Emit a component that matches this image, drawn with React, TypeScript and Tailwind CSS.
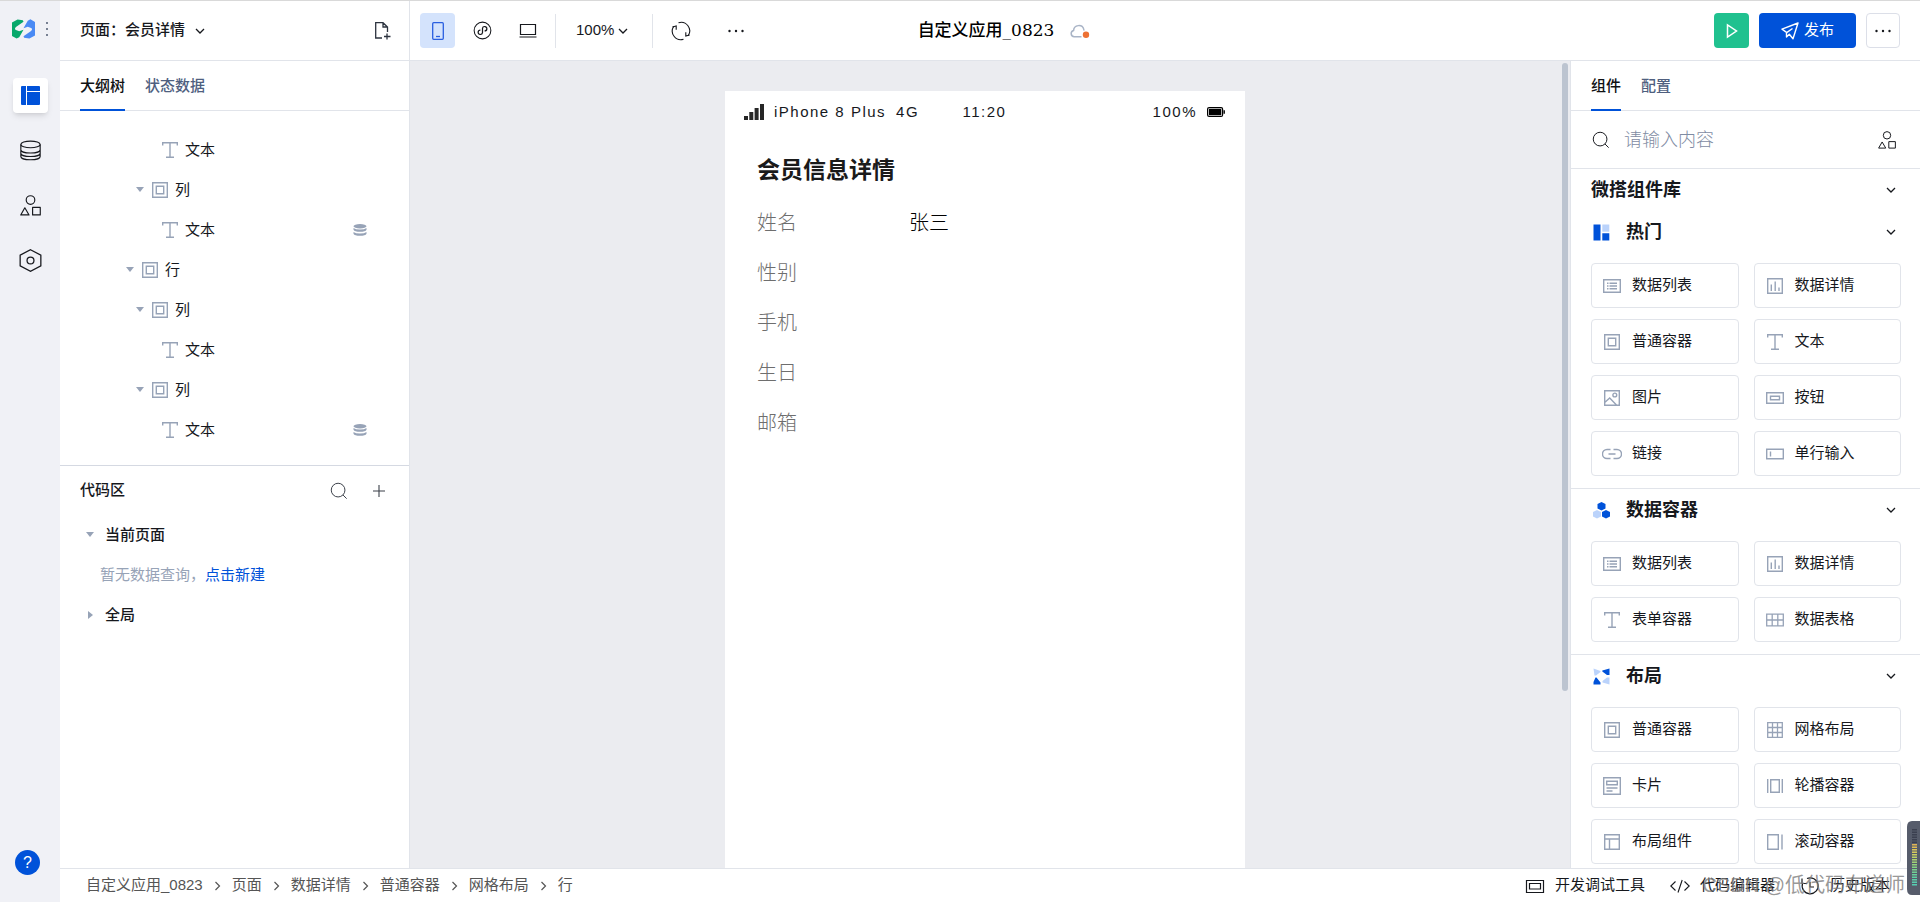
import { useState } from "react";
import type { ReactNode } from "react";
import clsx from "clsx";

type IconProps = { size?: number; className?: string };

const Svg = ({
  size = 20,
  className,
  strokeWidth = 1.1,
  children,
}: IconProps & { strokeWidth?: number; children: ReactNode }) => (
  <svg
    width={size}
    height={size}
    viewBox="0 0 20 20"
    fill="none"
    stroke="currentColor"
    strokeWidth={strokeWidth}
    className={clsx("shrink-0", className)}
    aria-hidden="true"
  >
    {children}
  </svg>
);

const LogoIcon = () => (
  <svg width="23" height="20" viewBox="0 0 70 60" className="shrink-0" aria-hidden="true">
    <path fill="#07a86b" d="M0 10 17 1 33 3 35 8 12 24Q6 30 12 33L22 37 35 32 22 55 14 59 0 51Z" />
    <path fill="#4a8af4" d="M70 50 53 59 37 57 35 52 58 36Q64 30 58 27L48 23 35 28 48 5 56 0 70 9Z" />
  </svg>
);

const ChevronDown = ({ size = 10, className }: IconProps) => (
  <svg width={size} height={size} viewBox="0 0 10 10" fill="none" stroke="currentColor" strokeWidth="1.3" className={clsx("shrink-0", className)} aria-hidden="true">
    <path d="M1 3 5 7 9 3" />
  </svg>
);

const ChevronRight = () => (
  <svg width="9" height="10" viewBox="0 0 9 10" fill="none" stroke="currentColor" strokeWidth="1.2" className="shrink-0" aria-hidden="true">
    <path d="M2.500 1 6.500 5 2.500 9" />
  </svg>
);

const Caret = ({ open = true }: { open?: boolean }) => (
  <svg width="12" height="12" viewBox="0 0 12 12" fill="#97a3b7" className="shrink-0" aria-hidden="true">
    {open ? <path d="M2 3h8L6 8Z" /> : <path d="M4 2v8l5-4Z" />}
  </svg>
);

const LayoutIcon = () => (
  <svg width="19" height="19" viewBox="0 0 19 19" fill="#0052d9" className="shrink-0" aria-hidden="true">
    <path d="M1 0h4v19H1a1 1 0 0 1-1-1V1a1 1 0 0 1 1-1ZM6 0H18a1 1 0 0 1 1 1v4H6ZM6 6H19V18a1 1 0 0 1-1 1H6Z" />
  </svg>
);

const DatabaseIcon = ({ size }: IconProps) => (
  <Svg size={size}>
    <ellipse cx="10" cy="4.200" rx="9.200" ry="3.200" />
    <path d="M.8 4.200v11.400c0 1.800 4 3.200 9.200 3.200s9.200-1.400 9.200-3.200V4.200M.8 9.200c0 1.800 4 3.200 9.200 3.200s9.200-1.400 9.200-3.200M.8 12.500c0 1.800 4 3.200 9.200 3.200s9.200-1.400 9.200-3.200" />
  </Svg>
);

const DatabaseSolid = () => (
  <svg width="14" height="12" viewBox="0 0 14 12" fill="#97a3b7" className="shrink-0" aria-hidden="true">
    <ellipse cx="7" cy="2.200" rx="6.500" ry="2.200" />
    <path d="M.5 4q2 1.500 6.500 1.500T13.500 4v1.800q-1 2-6.500 2t-6.500-2ZM.5 8q2 1.500 6.500 1.500T13.500 8v1.800q-1 2-6.500 2t-6.500-2Z" />
  </svg>
);

const ShapesIcon = ({ size }: IconProps) => (
  <Svg size={size}>
    <circle cx="10" cy="4.800" r="4.100" />
    <path d="M4.600 12.200 8.600 19H.7ZM12 11.800h7.300V19H12Z" strokeLinejoin="round" />
  </Svg>
);

const HexIcon = ({ size }: IconProps) => (
  <Svg size={size}>
    <path d="m10 .6 9 4.700v9.400l-9 4.700L1 14.700V5.300Z" />
    <circle cx="10" cy="10" r="3" />
  </Svg>
);

const SearchIcon = ({ size = 18 }: IconProps) => (
  <Svg size={size}>
    <circle cx="9" cy="9" r="7.600" />
    <path d="m14.500 14.500 4 4" />
  </Svg>
);

const PlusIcon = () => (
  <Svg size={12} strokeWidth={1.8}>
    <path d="M10 0v20M0 10h20" />
  </Svg>
);

const NewPageIcon = () => (
  <svg width="17" height="19" viewBox="0 0 17 19" fill="none" stroke="currentColor" strokeWidth="1.3" className="shrink-0" aria-hidden="true">
    <path d="M8 17H1.700V1.700H9L13.500 6v5M9 1.700V6h4.500M13 12.500v6M10 15.500h6.500" />
  </svg>
);

const PhoneIcon = () => (
  <svg width="12" height="18" viewBox="0 0 12 18" fill="none" stroke="currentColor" strokeWidth="1.300" className="shrink-0" aria-hidden="true">
    <rect x=".7" y=".7" width="10.600" height="16.600" rx="1" />
    <path d="M4 14.500h4" />
  </svg>
);

const MiniProgramIcon = () => (
  <Svg size={19}>
    <circle cx="10" cy="10" r="8.800" />
    <path d="M7.800 9.600a2.300 2.300 0 1 0 2.200 2.600V7.800a2.300 2.300 0 1 1 2.200 2.600" strokeWidth="1.300" />
  </Svg>
);

const LaptopIcon = () => (
  <svg width="18" height="15" viewBox="0 0 18 15" fill="none" stroke="currentColor" strokeWidth="1.200" className="shrink-0" aria-hidden="true">
    <path d="M1.500 1.500h15v10h-15ZM.5 14h17" />
  </svg>
);

const RefreshIcon = () => (
  <Svg size={20}>
    <path d="M7.500 1.700A8.600 8.600 0 0 1 17.200 14.700M12.500 18.300A8.600 8.600 0 0 1 2.800 5.300" />
    <path d="M14.800 11.200v3.900l3.800-1.200M5.200 8.800V4.900L1.400 6.100" />
  </Svg>
);

const DotsIcon = () => (
  <svg width="18" height="4" viewBox="0 0 18 4" fill="currentColor" className="shrink-0" aria-hidden="true">
    <circle cx="2.500" cy="2" r="1.200" />
    <circle cx="9" cy="2" r="1.200" />
    <circle cx="15.500" cy="2" r="1.200" />
  </svg>
);

const CloudIcon = () => (
  <svg width="20" height="16" viewBox="0 0 20 16" fill="none" className="shrink-0" aria-hidden="true">
    <path d="M11.500 13.800H4.200A3.200 3.200 0 0 1 3.600 7.500 5.200 5.200 0 0 1 13.800 6.400L14.200 7.500" stroke="#a9b4c6" strokeWidth="1.500" />
    <circle cx="16" cy="11.800" r="3.200" fill="#ed7133" />
  </svg>
);

const PlayIcon = () => (
  <svg width="12" height="16" viewBox="0 0 12 16" fill="none" stroke="#fff" strokeWidth="1.500" className="shrink-0" aria-hidden="true">
    <path d="M1.500 2v12L10.500 8Z" />
  </svg>
);

const SendIcon = () => (
  <svg width="18" height="18" viewBox="0 0 18 18" fill="none" stroke="#fff" strokeWidth="1.400" strokeLinejoin="round" className="shrink-0" aria-hidden="true">
    <path d="M17 1 1 7.200 5.500 10.300V15L8.300 12.300 12 16.800ZM6 10.300 11.500 6.500" />
  </svg>
);

const BoxIcon = ({ size }: IconProps) => (
  <Svg size={size} strokeWidth={1.4}>
    <path d="M2.700 2.700h14.600v14.600H2.700ZM6.300 6.300h7.400v7.400H6.300Z" />
  </Svg>
);

const TextIcon = ({ size }: IconProps) => (
  <Svg size={size} strokeWidth={1.4}>
    <path d="M2.700 5.500V2.700h14.600v2.800M10 2.700v14.600M6 17.300h8" />
  </Svg>
);

const ListIcon = () => (
  <Svg strokeWidth={1.4}>
    <path d="M1.700 3.700h16.600v12.600H1.700ZM5 7.200h1.500M7.500 7.200H15M5 10h1.500M7.500 10H15M5 12.800h1.500M7.500 12.800H15" />
  </Svg>
);

const DetailIcon = () => (
  <Svg strokeWidth={1.400}>
    <path d="M2.700 2.700h14.600v14.600H2.700ZM6.300 8.500V15M10.200 5.500V15M14 11.500V15" />
  </Svg>
);

const ImageIcon = () => (
  <Svg strokeWidth={1.400}>
    <path d="M2.700 2.700h14.600v14.600H2.700ZM2.700 14.500l5-4.500 7 7.300" />
    <circle cx="12.800" cy="7" r="1.900" />
  </Svg>
);

const ButtonIcon = () => (
  <Svg strokeWidth={1.400}>
    <path d="M1.700 4.700h16.600v10.600H1.700ZM5.500 8.200h9v3.600h-9Z" />
  </Svg>
);

const LinkIcon = () => (
  <Svg strokeWidth={1.400}>
    <path d="M8.500 5.500H5a4.500 4.500 0 0 0 0 9h3.500M11.500 5.500H15a4.500 4.500 0 0 1 0 9h-3.500M6.500 10h7" />
  </Svg>
);

const InputIcon = () => (
  <Svg strokeWidth={1.400}>
    <path d="M1.700 5.200h16.600v9.600H1.700ZM5.500 7.500v5" />
  </Svg>
);

const TableIcon = () => (
  <Svg strokeWidth={1.300}>
    <path d="M1.700 4.200h16.600v11.600H1.700ZM1.700 10h16.600M7.200 4.200v11.600M12.800 4.200v11.600" />
  </Svg>
);

const GridIcon = () => (
  <Svg strokeWidth={1.300}>
    <path d="M2.700 2.700h14.600v14.600H2.700ZM2.700 7.500h14.600M2.700 12.500h14.600M7.500 2.700v14.600M12.500 2.700v14.600" />
  </Svg>
);

const CardIcon = () => (
  <Svg strokeWidth={1.400}>
    <path d="M1.700 1.700h16.600v16.600H1.700ZM4.700 5.200h10.600v3.600H4.700ZM4.500 12h11M4.500 15h6" />
  </Svg>
);

const CarouselIcon = () => (
  <Svg strokeWidth={1.400}>
    <path d="M2.700 3v14M5.700 3.700h8.600v12.600H5.700ZM17.300 3v14" />
  </Svg>
);

const PanelsIcon = () => (
  <Svg strokeWidth={1.400}>
    <path d="M2.700 2.700h14.600v14.600H2.700ZM2.700 7h14.600M7.500 7v10.300" />
  </Svg>
);

const ScrollIcon = () => (
  <Svg strokeWidth={1.400}>
    <path d="M2.700 2.700h10.600v14.600H2.700ZM17 2.500v15" />
  </Svg>
);

const HotIcon = () => (
  <svg width="17" height="17" viewBox="0 0 17 17" className="shrink-0" aria-hidden="true">
    <path fill="#0052d9" d="M.5.500h7v16h-7ZM9.300 9.300h7v7.200h-7Z" />
    <path fill="#bbd3fb" d="M9.300.500h7v7.200h-7Z" />
  </svg>
);

const DataGroupIcon = () => (
  <svg width="17" height="17" viewBox="0 0 17 17" className="shrink-0" aria-hidden="true">
    <path fill="#bbd3fb" d="m4 8 4 2.100v4.400l-4 2.100-4-2.100v-4.400Z" />
    <path fill="#0052d9" d="m8.500 0 4 2.100v4.400l-4 2.100-4-2.100V2.100ZM13 8l4 2.100v4.400l-4 2.100-4-2.100v-4.400Z" />
  </svg>
);

const LayoutGroupIcon = () => (
  <svg width="17" height="17" viewBox="0 0 17 17" className="shrink-0" aria-hidden="true">
    <path fill="#0052d9" d="M16.500.500v6.500h-2.500L9.300 3.500v-1ZM.500 16.500v-2.500L2.500 9.500H3.500L7.500 14.500v2Z" />
    <path fill="#bbd3fb" d="M.500.500 7.500 3v1L3 7.500H1.500ZM16.500 16.500l-7-2v-1.500l4.500-3.500h2.500Z" />
  </svg>
);

const SignalIcon = () => (
  <svg width="20" height="16" viewBox="0 0 20 16" fill="#262626" className="shrink-0" aria-hidden="true">
    <path d="M0 12h4v4H0ZM5.300 8h4v8h-4ZM10.600 4h4v12h-4ZM16 0h4v16h-4Z" />
  </svg>
);

const BatteryIcon = () => (
  <svg width="18" height="10" viewBox="0 0 18 10" fill="none" stroke="#000" className="shrink-0" aria-hidden="true">
    <rect x=".6" y=".6" width="15" height="8.800" rx="1.500" strokeWidth="1.200" />
    <path d="M1.900 1.900h12.400v6.200H1.900Z" fill="#000" stroke="none" />
    <path d="M17.200 3.200v3.600" strokeWidth="1.400" />
  </svg>
);

const DebugIcon = () => (
  <Svg strokeWidth={1.200}>
    <path d="M1.500 4.500h17v12h-17ZM4.500 7.500h11v5.500h-11Z" />
  </Svg>
);

const CodeIcon = () => (
  <Svg>
    <path d="M5.500 5.500.8 10l4.700 4.500M14.500 5.500l4.700 4.500-4.700 4.500M12.200 4 8 16.500" />
  </Svg>
);

const HistoryIcon = () => (
  <Svg strokeWidth={1.200}>
    <path d="M2.500 7.500a8 8 0 1 0 4.500-5M2 2.500v5h5M10 6v5h4" />
  </Svg>
);

const Tab = ({ active, children, onClick }: { active: boolean; children: ReactNode; onClick: () => void }) => (
  <button
    role="tab"
    aria-selected={active}
    onClick={onClick}
    className={clsx(
      "-mb-px h-[50px] border-b-2 pt-0.5 font-medium",
      active ? "border-[#0052d9] text-[#101113]" : "border-transparent text-[#4f5f7f]"
    )}
  >
    {children}
  </button>
);

const Tabs = ({ tabs }: { tabs: string[] }) => {
  const [current, setCurrent] = useState(0);

  return (
    <div role="tablist" className="flex h-[50px] shrink-0 gap-5 border-b border-[#e1e4ea] px-5">
      {tabs.map((tab, index) => (
        <Tab key={tab} active={current === index} onClick={() => setCurrent(index)}>
          {tab}
        </Tab>
      ))}
    </div>
  );
};

const tree = [
  { label: "文本", kind: "text", indent: "pl-[84px]", bound: false },
  { label: "列", kind: "box", indent: "pl-[74px]", bound: false },
  { label: "文本", kind: "text", indent: "pl-[84px]", bound: true },
  { label: "行", kind: "box", indent: "pl-[64px]", bound: false },
  { label: "列", kind: "box", indent: "pl-[74px]", bound: false },
  { label: "文本", kind: "text", indent: "pl-[84px]", bound: false },
  { label: "列", kind: "box", indent: "pl-[74px]", bound: false },
  { label: "文本", kind: "text", indent: "pl-[84px]", bound: true },
];

const groups = [
  {
    title: "热门",
    icon: <HotIcon />,
    items: [
      { label: "数据列表", icon: <ListIcon /> },
      { label: "数据详情", icon: <DetailIcon /> },
      { label: "普通容器", icon: <BoxIcon /> },
      { label: "文本", icon: <TextIcon /> },
      { label: "图片", icon: <ImageIcon /> },
      { label: "按钮", icon: <ButtonIcon /> },
      { label: "链接", icon: <LinkIcon /> },
      { label: "单行输入", icon: <InputIcon /> },
    ],
  },
  {
    title: "数据容器",
    icon: <DataGroupIcon />,
    items: [
      { label: "数据列表", icon: <ListIcon /> },
      { label: "数据详情", icon: <DetailIcon /> },
      { label: "表单容器", icon: <TextIcon /> },
      { label: "数据表格", icon: <TableIcon /> },
    ],
  },
  {
    title: "布局",
    icon: <LayoutGroupIcon />,
    items: [
      { label: "普通容器", icon: <BoxIcon /> },
      { label: "网格布局", icon: <GridIcon /> },
      { label: "卡片", icon: <CardIcon /> },
      { label: "轮播容器", icon: <CarouselIcon /> },
      { label: "布局组件", icon: <PanelsIcon /> },
      { label: "滚动容器", icon: <ScrollIcon /> },
    ],
  },
];

const fields = [
  { label: "姓名", value: "张三" },
  { label: "性别", value: "" },
  { label: "手机", value: "" },
  { label: "生日", value: "" },
  { label: "邮箱", value: "" },
];

const crumbs = ["自定义应用_0823", "页面", "数据详情", "普通容器", "网格布局", "行"];

const Sidebar = () => {
  const items = [
    { label: "页面布局", icon: <LayoutIcon /> },
    { label: "数据源", icon: <DatabaseIcon size={21} /> },
    { label: "素材", icon: <ShapesIcon size={21} /> },
    { label: "设置", icon: <HexIcon size={23} /> },
  ];

  return (
    <aside className="flex w-[60px] shrink-0 flex-col bg-[#f0f1f6]">
      <div className="flex h-[55px] items-center gap-2.5 pl-3">
        <LogoIcon />
        <button aria-label="更多" className="flex flex-col gap-1 px-px text-[#4f5a70]">
          <span className="size-0.5 rounded-full bg-current" />
          <span className="size-0.5 rounded-full bg-current" />
          <span className="size-0.5 rounded-full bg-current" />
        </button>
      </div>
      <nav className="mt-[22px] flex flex-col gap-5 pl-[13px]">
        {items.map((item, index) => (
          <button
            key={item.label}
            aria-label={item.label}
            className={clsx(
              "flex size-[35px] items-center justify-center rounded",
              index === 0 && "bg-white shadow-md"
            )}
          >
            {item.icon}
          </button>
        ))}
      </nav>
      <button className="mt-auto mb-[27px] ml-[15px] flex size-[25px] items-center justify-center rounded-full bg-[#0052d9] text-base text-white">
        ?
      </button>
    </aside>
  );
};

const Header = () => (
  <header className="flex h-[60px] shrink-0 border-b border-[#e1e4ea]">
    <div className="flex flex-1 items-center">
      <div className="flex h-full w-[350px] items-center justify-between border-r border-[#e1e4ea] pr-[18px] pl-5">
        <button className="flex items-center gap-2.5 font-medium">
          页面：会员详情
          <ChevronDown />
        </button>
        <button aria-label="新建页面" className="text-[#2c333f]">
          <NewPageIcon />
        </button>
      </div>
      <div className="flex items-center gap-2.5 pl-2.5">
        <button aria-label="手机" className="flex size-[35px] items-center justify-center rounded bg-[#d4e3fc] text-[#2a5fe0]">
          <PhoneIcon />
        </button>
        <button aria-label="小程序" className="flex size-[35px] items-center justify-center">
          <MiniProgramIcon />
        </button>
        <button aria-label="电脑" className="flex size-[35px] items-center justify-center">
          <LaptopIcon />
        </button>
        <span className="h-[34px] w-px bg-[#e1e4ea]" />
        <button className="flex items-center gap-1 pr-3.5 pl-2.5">
          100%
          <ChevronDown />
        </button>
        <span className="h-[34px] w-px bg-[#e1e4ea]" />
        <button aria-label="刷新" className="flex size-[35px] items-center justify-center">
          <RefreshIcon />
        </button>
        <button aria-label="更多操作" className="ml-2.5 flex size-[35px] items-center justify-center">
          <DotsIcon />
        </button>
      </div>
    </div>
    <div className="flex items-center gap-4 pl-12">
      <h1 className="font-['DejaVu_Serif','Noto_Sans_CJK_SC',serif] text-[17px] font-medium text-black">
        自定义应用_0823
      </h1>
      <CloudIcon />
    </div>
    <div className="flex flex-1 items-center justify-end gap-2.5 pr-5">
      <button aria-label="预览" className="flex size-[35px] items-center justify-center rounded bg-[#20c18f]">
        <PlayIcon />
      </button>
      <button className="flex h-[35px] items-center gap-[5px] rounded bg-[#0052d9] px-[22px] text-white">
        <SendIcon />
        发布
      </button>
      <button aria-label="更多" className="flex h-[35px] w-[34px] items-center justify-center rounded border border-[#dcdfe8]">
        <DotsIcon />
      </button>
    </div>
  </header>
);

const OutlinePanel = () => (
  <section className="flex w-[350px] shrink-0 flex-col border-r border-[#e1e4ea]">
    <Tabs tabs={["大纲树", "状态数据"]} />
    <ul className="border-b border-[#d5d9e2] pt-[19px] pb-[15px]">
      {tree.map((node, index) => (
        <li key={index} className={clsx("flex h-10 items-center justify-between pr-[42px]", node.indent)}>
          <button className="flex items-center">
            <span className="mr-1.5 flex w-3">{node.kind === "box" && <Caret />}</span>
            <span className="-ml-0.5 mr-[5px] text-[#97a3b7]">
              {node.kind === "box" ? <BoxIcon /> : <TextIcon />}
            </span>
            {node.label}
          </button>
          {node.bound && <DatabaseSolid />}
        </li>
      ))}
    </ul>
    <div className="flex h-[49px] items-center pr-6 pl-5">
      <h2 className="flex-1 font-medium">代码区</h2>
      <button aria-label="搜索" className="mr-[25px] text-[#3a3f48]">
        <SearchIcon />
      </button>
      <button aria-label="新增" className="text-[#3a3f48]">
        <PlusIcon />
      </button>
    </div>
    <button className="flex h-10 items-center gap-[9px] pl-6 font-medium">
      <Caret />
      当前页面
    </button>
    <p className="flex h-10 items-center pl-10 text-[#97a3b7]">
      暂无数据查询，
      <a href="#new" className="text-[#0052d9]">
        点击新建
      </a>
    </p>
    <button className="flex h-10 items-center gap-[9px] pl-6 font-medium">
      <Caret open={false} />
      全局
    </button>
  </section>
);

const Canvas = () => (
  <main className="flex min-w-0 flex-1 bg-[#ebecf0]">
    <div className="flex flex-1 justify-center pt-[30px]">
      <div className="w-[520px] bg-white">
        <div className="grid h-[42px] grid-cols-3 items-center pr-5 pl-[19px] tracking-widest">
          <div className="flex items-center gap-2.5 whitespace-nowrap">
            <SignalIcon />
            <span>iPhone 8 Plus</span>
            <span>4G</span>
          </div>
          <span className="text-center">11:20</span>
          <div className="flex items-center justify-end gap-2.5">
            100%
            <BatteryIcon />
          </div>
        </div>
        <div className="px-8 pt-[22px]">
          <h2 className="mb-[13px] text-[23px] leading-[30px] font-bold text-[#1a1a1a]">会员信息详情</h2>
          <dl>
            {fields.map((field) => (
              <div key={field.label} className="grid h-[50px] grid-cols-3 items-center text-xl font-light">
                <dt className="text-[#6e6e6e]">{field.label}</dt>
                <dd className="text-black">{field.value}</dd>
              </div>
            ))}
          </dl>
        </div>
      </div>
    </div>
    <div className="w-2.5 px-0.5 pt-0.5">
      <div className="h-[78%] rounded-full bg-[#bcc4d0]" />
    </div>
  </main>
);

const ComponentPanel = () => (
  <section className="flex w-[350px] shrink-0 flex-col overflow-hidden border-l border-[#e1e4ea]">
    <Tabs tabs={["组件", "配置"]} />
    <div className="flex h-[58px] shrink-0 items-center border-b border-[#e1e4ea] pr-6 pl-[21px]">
      <SearchIcon />
      <input
        type="text"
        aria-label="搜索组件"
        placeholder="请输入内容"
        className="ml-3.5 min-w-0 flex-1 text-lg font-light outline-none placeholder:text-[#7f8ca3]"
      />
      <button aria-label="素材">
        <ShapesIcon size={18} />
      </button>
    </div>
    <button className="flex h-[42px] shrink-0 items-center justify-between pr-6 pl-5 text-lg font-bold">
      微搭组件库
      <ChevronDown />
    </button>
    {groups.map((group) => (
      <div key={group.title} className="shrink-0 border-b border-[#e1e4ea] pb-3">
        <button className="flex h-[42px] w-full items-center pr-6 pl-[22px] text-lg font-bold">
          {group.icon}
          <span className="ml-4 flex-1 text-left">{group.title}</span>
          <ChevronDown />
        </button>
        <div className="mt-2.5 grid grid-cols-2 gap-x-[15px] gap-y-[11px] pr-[19px] pl-5">
          {group.items.map((item) => (
            <button key={item.label} className="flex h-[45px] items-center gap-2.5 rounded border border-[#e1e4ea] pl-2.5">
              <span className="text-[#97a3b7]">{item.icon}</span>
              {item.label}
            </button>
          ))}
        </div>
      </div>
    ))}
  </section>
);

const Footer = () => (
  <footer className="flex h-[34px] shrink-0 items-center justify-between border-t border-[#e1e4ea] pr-[30px] pl-[26px]">
    <nav className="flex items-center gap-2.5 text-[#555555]">
      {crumbs.map((crumb, index) => (
        <span key={crumb} className="flex items-center gap-2.5">
          {index > 0 && <ChevronRight />}
          <a href="#crumb">{crumb}</a>
        </span>
      ))}
    </nav>
    <div className="flex items-center gap-[25px]">
      <button className="flex items-center gap-2.5">
        <DebugIcon />
        开发调试工具
      </button>
      <button className="flex items-center gap-2.5">
        <CodeIcon />
        代码编辑器
      </button>
      <button className="flex items-center gap-2.5">
        <HistoryIcon />
        历史版本
      </button>
    </div>
  </footer>
);

const meterColors = [
  "#3b4050", "#3b4050", "#3b4050", "#3b4050", "#3b4050", "#3b4050",
  "#e0b455", "#e0bd55", "#dcc658", "#d6cc5c", "#c9d062", "#bcd268", "#add36e", "#a0d375",
  "#92d37c", "#85d384", "#7ad38c", "#70d294", "#68d19b", "#61d0a2", "#5ccfa8", "#58ceae", "#55cdb2",
];

const LevelMeter = () => (
  <svg width="13" height="74" viewBox="0 0 13 74" className="absolute right-0 bottom-[7px]" aria-hidden="true">
    <path d="M13 0H5Q0 0 0 6v62q0 6 5 6h8Z" fill="#565c6b" />
    {meterColors.map((color, index) => (
      <rect key={index} x="5" y={8 + index * 2.5} width="5" height="1.500" fill={color} />
    ))}
  </svg>
);

export default function App() {
  return (
    <div className="relative flex h-screen overflow-hidden border-t border-[#d9d9d9] bg-white font-['Liberation_Sans','Noto_Sans_CJK_SC',sans-serif] text-[15px] text-[#16181d]">
      <Sidebar />
      <div className="flex min-w-0 flex-1 flex-col">
        <Header />
        <div className="flex min-h-0 flex-1">
          <OutlinePanel />
          <Canvas />
          <ComponentPanel />
        </div>
        <Footer />
      </div>
      <p className="pointer-events-none absolute right-[15px] bottom-[3px] text-xl text-[#7d7d7d]/80">
        CSDN @低代码布道师
      </p>
      <LevelMeter />
    </div>
  );
}
